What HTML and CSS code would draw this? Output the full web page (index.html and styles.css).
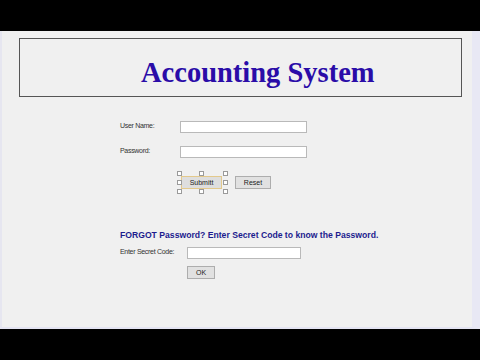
FILE: index.html
```html
<!DOCTYPE html>
<html>
<head>
<meta charset="utf-8">
<link rel="stylesheet" href="styles.css">
</head>
<body>
<div class="bar"></div>
<div class="panel">
  <div class="title-box"><h1 class="title">Accounting System</h1></div>
  <div class="login">
    <div class="row row-first">
      <span class="label">User Name:</span>
      <span class="input input-login"></span>
    </div>
    <div class="row row-second">
      <span class="label">Password:</span>
      <span class="input input-login"></span>
    </div>
    <div class="buttons">
      <span class="selected">
        <span class="btn btn-submit">Submitt</span>
        <i class="h h-tl"></i><i class="h h-tm"></i><i class="h h-tr"></i>
        <i class="h h-ml"></i><i class="h h-mr"></i>
        <i class="h h-bl"></i><i class="h h-bm"></i><i class="h h-br"></i>
      </span>
      <span class="btn btn-reset">Reset</span>
    </div>
  </div>
  <div class="forgot">
    <div class="forgot-title">FORGOT Password? Enter Secret Code to know the Password.</div>
    <div class="row row-secret">
      <span class="label label-secret">Enter Secret Code:</span>
      <span class="input input-secret"></span>
    </div>
    <div class="ok-row"><span class="btn btn-ok">OK</span></div>
  </div>
</div>
<div class="bar"></div>
</body>
</html>
```
FILE: styles.css
```css
html, body {
  margin: 0;
  padding: 0;
  background: #000;
  width: 480px;
  height: 360px;
  overflow: hidden;
}
.bar {
  height: 31px;
  background: #000;
}
.panel {
  height: 298px;
  box-sizing: border-box;
  background: #f0f0f0;
  border-left: 2px solid #e6e6f0;
  border-right: 8px solid #e8e8f4;
  border-bottom: 2px solid #e4e4f2;
  padding-top: 7px;
  font-family: "Liberation Sans", Arial, sans-serif;
}
.title-box {
  margin-left: 17px;
  width: 443px;
  height: 59px;
  box-sizing: border-box;
  border: 1px solid #555;
  padding-top: 20px;
  padding-left: 121px;
}
.title {
  margin: 0;
  font-family: "Liberation Serif", "Times New Roman", serif;
  font-weight: bold;
  font-size: 28.5px;
  line-height: 28px;
  color: #2a0ca8;
}
.login {
  margin-left: 118px;
  padding-top: 24px;
}
.row {
  display: flex;
  align-items: center;
  height: 12px;
}
.row-second {
  margin-top: 13px;
}
.label {
  width: 60px;
  font-size: 7px;
  letter-spacing: -0.3px;
  color: #333;
  position: relative;
  top: -1.5px;
}
.input {
  display: block;
  height: 12px;
  box-sizing: border-box;
  background: #fff;
  border: 1px solid #b9b9b9;
}
.input-login {
  width: 127px;
}
.buttons {
  display: flex;
  align-items: center;
  margin-top: 18px;
  margin-left: 61px;
}
.btn {
  display: flex;
  align-items: center;
  justify-content: center;
  box-sizing: border-box;
  height: 13px;
  background: #e1e1e1;
  border: 1px solid #adadad;
  font-size: 7px;
  line-height: 7px;
  color: #222;
}
.selected {
  position: relative;
  display: flex;
  height: 13px;
}
.btn-submit {
  width: 41px;
  border-color: #e3c98c;
  background: #dedede;
}
.btn-reset {
  width: 36px;
  margin-left: 13px;
}
.h {
  position: absolute;
  width: 3px;
  height: 3px;
  background: #fff;
  border: 1px solid #9a9a9a;
}
.h-tl { left: -4px; top: -5px; }
.h-tm { left: 18px; top: -5px; }
.h-tr { left: 42px; top: -5px; }
.h-ml { left: -4px; top: 4px; }
.h-mr { left: 42px; top: 4px; }
.h-bl { left: -4px; top: 13px; }
.h-bm { left: 18px; top: 13px; }
.h-br { left: 42px; top: 13px; }
.forgot {
  margin-left: 118px;
  margin-top: 40px;
}
.forgot-title {
  font-weight: bold;
  font-size: 8.65px;
  color: #1c1c8e;
  line-height: 12px;
}
.row-secret {
  margin-top: 6px;
}
.label-secret {
  width: 67px;
}
.input-secret {
  width: 114px;
}
.ok-row {
  display: flex;
  margin-top: 7px;
  margin-left: 67px;
}
.btn-ok {
  width: 28px;
}
```
